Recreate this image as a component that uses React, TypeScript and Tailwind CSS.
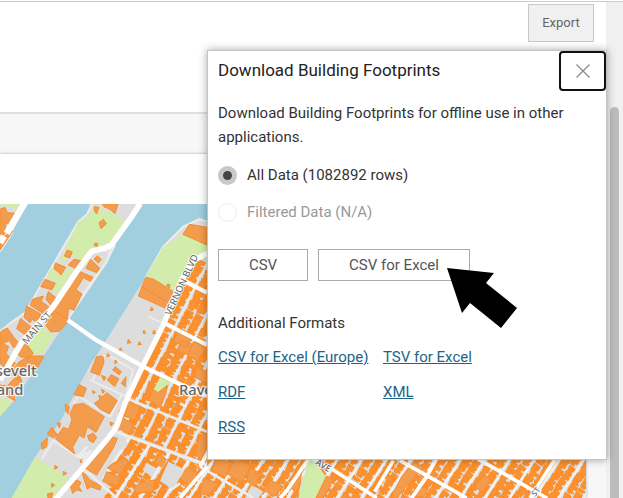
import React from "react";

type Pt = [number, number];

function random(seed: number) {
  let s = seed;
  return () => {
    s = (s * 16807) % 2147483647;
    return s / 2147483647;
  };
}

/* Rows of small houses along a street grid turned by `angle` degrees. */
function houseRows(
  ox: number,
  oy: number,
  angle: number,
  across: number,
  down: number,
  street: number,
  seed: number,
): string {
  const r = random(seed);
  const a = (angle * Math.PI) / 180;
  const at = (u: number, v: number): Pt => [
    ox + u * Math.cos(a) - v * Math.sin(a),
    oy + u * Math.sin(a) + v * Math.cos(a),
  ];
  const out: string[] = [];
  for (let u = 0; u < across; u += street) {
    for (let side = 0; side < 2; side++) {
      const base = u + 5 + side * (street / 2 - 3);
      const width = street / 2 - 3;
      let v = 0;
      while (v < down) {
        const len = 9 + r() * 18;
        const l = base + r() * 4;
        const w = width - r() * 8;
        const notch = w * (0.5 + r() * 0.4);
        const pts = [
          at(l, v),
          at(l + w, v + r() * 3),
          at(l + w, v + len * 0.6),
          at(l + notch, v + len * 0.65),
          at(l + notch, v + len),
          at(l + r() * 5, v + len),
        ];
        out.push("M" + pts.map((p) => `${Math.round(p[0])} ${Math.round(p[1])}`).join("L") + "Z");
        v += len + (r() > 0.85 ? 4 : 0);
      }
    }
  }
  return out.join("");
}

function gridLines(ox: number, oy: number, angle: number, across: number, down: number, street: number): string {
  const a = (angle * Math.PI) / 180;
  let d = "";
  for (let u = 0; u <= across; u += street) {
    const x = ox + u * Math.cos(a);
    const y = oy + u * Math.sin(a);
    d += `M${Math.round(x)} ${Math.round(y)}L${Math.round(x - down * Math.sin(a))} ${Math.round(y + down * Math.cos(a))}`;
  }
  return d;
}

const northHouses = houseRows(560, 190, 27, 420, 640, 68, 77);
const northStreets = gridLines(560, 190, 27, 420, 640, 68);
const southHouses = houseRows(1050, -275, 33, 1700, 1500, 62, 1234);
const southStreets = gridLines(1050, -275, 33, 1700, 1500, 62);

/* Buildings of the island and its west bank. */
const islandBuildings =
  "M0 58L15 52L22 68L46 70L28 104L18 98L15 130L0 142ZM12 140L38 124L0 180V158Z" +
  "M283 50L297 52L290 72L283 62ZM307 42H354L345 71L330 58L312 50ZM297 98L310 88L319 101L303 116Z" +
  "M283 160L293 160L291 170L283 167ZM202 180L217 186L209 204L193 198ZM205 225L222 208L244 212L234 239Z" +
  "M166 219L197 232L183 255L174 245L162 236ZM122 290L135 268L166 280L156 299ZM258 235L272 208L299 235L290 248L270 240Z" +
  "M282 207L292 198L304 208L295 219ZM240 245L279 262L271 274L250 263L228 299L246 312L222 361L205 354L202 398L178 424L152 426L138 407L155 370L175 337Z" +
  "M145 305L170 325L155 348L138 328ZM98 328L130 318L124 334L148 352L132 372L90 345Z" +
  "M80 348L122 372L112 397L96 388L90 398L72 382ZM62 386L92 410L106 428L72 432L50 416Z" +
  "M5 422L22 414L40 440L62 465L40 472L28 452L8 460L0 450V430ZM0 455L26 470L18 490L46 520L26 545L0 520Z" +
  "M45 478L74 455L100 490L86 505L60 500ZM90 498L132 498L104 548L88 532L68 548L55 570L28 550L58 515Z" +
  "M40 568L60 560L66 576L40 602L45 632L20 618L0 600V585L22 588Z";

const riversideBuildings =
  "M568 103L621 112V165L549 133ZM437 262L462 268L520 305L495 354L415 318Z" +
  "M503 282L510 284L508 294L500 288ZM455 351L460 360L450 362ZM432 420L437 430L429 429ZM462 420L467 431L458 431Z" +
  "M385 448L393 458L382 460ZM418 455L424 463L414 465ZM362 473L366 481L357 480Z" +
  "M290 500L308 498L312 516L298 556L272 546L282 520ZM323 490L330 498L320 500ZM345 510L352 515L345 522Z" +
  "M338 540L346 530L364 545L358 554ZM322 570L334 554L356 566L344 590ZM364 580L378 560L376 590ZM304 556L318 562L312 572Z" +
  "M222 614L238 584L259 595L250 620ZM278 602L286 606L280 612ZM305 598L314 604L308 610Z" +
  "M283 640L300 628L296 616L308 620L320 608L352 632L328 672L300 658ZM195 642L208 650L204 672L198 664Z" +
  "M222 645L250 640L313 680L288 727L262 710L252 744L238 735L218 772L224 792L166 746L190 712L206 718L216 688L210 672Z" +
  "M142 732L155 712L172 734L160 744ZM124 760L142 744L140 770L126 778ZM172 698L182 700L178 714ZM330 696L340 700L332 708Z" +
  "M262 736L272 734L278 728L290 742L280 758L268 752ZM240 806L252 810L242 818ZM165 826L174 832L164 838ZM190 844L200 850L190 856Z" +
  "M155 880L164 886L155 892ZM142 912L158 908L155 924H144Z" +
  "M208 878L232 870L243 878L236 890L246 904L230 900L218 910ZM245 845L258 855L270 870L304 888L300 900L270 890L262 898Z";

const cityBuildings =
  "M580 455L618 475L592 514L564 498ZM545 452L578 462L562 494L530 482ZM533 415L576 435L562 472L520 455ZM585 445L621 462V490Z" +
  "M446 628L458 598L474 608L502 586L498 610L480 654Z" +
  "M375 628L420 650L404 690L368 676L356 668ZM358 680L400 700L388 734L350 712Z" +
  "M590 530L621 545V580L584 562ZM598 740L621 730V792L606 810L586 792Z" +
  "M300 780L330 740L352 745L340 774L290 855L255 835Z" +
  "M338 820L372 804L385 815L360 854L322 834ZM320 845L362 862L352 890L308 874ZM425 875L465 870L458 905L410 910L400 895Z" +
  "M480 792L499 808L485 832L464 818ZM562 832L592 850L575 890L540 868ZM592 822L612 828L602 844Z" +
  "M1240 816L1270 830L1190 924H1172L1205 860ZM1270 830L1296 858L1278 874L1272 892L1252 878ZM1250 886L1286 896L1270 922L1232 916Z" +
  "M1452 856L1474 870L1446 906L1424 890Z" +
  "M700 802L752 826L725 878L680 850ZM750 832L780 850L768 890L740 874ZM812 870L850 890L820 918L790 900ZM764 854L784 844L780 864Z" +
  "M888 852L905 842L900 885L888 908L870 890ZM980 858L1000 868L970 924H948Z" +
  "M645 806L700 818L675 862L636 842ZM610 865L656 880L628 912H600Z";

const parks =
  "M0 42H66L58 66L36 52H18L0 44ZM262 72L285 52L345 72L378 98L330 165L275 132L250 88L265 78Z" +
  "M235 95L250 88L278 132L320 166L285 178L265 190L245 212L215 196L190 188Z" +
  "M188 195L206 190L200 214L178 222ZM205 232L220 240L175 310L153 298Z" +
  "M150 240L170 222L163 240L185 258L165 275L140 262ZM115 408L164 434L132 480L80 478Z" +
  "M85 475L160 440L125 492L86 494ZM0 622L38 636L0 680Z" +
  "M550 130L621 168V205L560 235L515 318L435 262L490 170Z" +
  "M105 801L205 862L165 924H35Z";

function CityMap() {
  return (
    <svg
      viewBox="0 42 1758 882"
      preserveAspectRatio="xMinYMin slice"
      className="block size-full bg-[#dddddd]"
      role="img"
      aria-label="Map of building footprints"
    >
      <defs>
        <clipPath id="north">
          <path d="M621 200L585 215L558 260L505 380L440 510L340 715L621 820Z" />
        </clipPath>
        <clipPath id="south">
          <path d="M345 725L621 835V750L1758 750V924H180Z" />
        </clipPath>
      </defs>
      <path
        fill="#a1cfdf"
        d="M80 42H275L262 72L235 95L75 368L30 400L0 424V184L38 126ZM430 42H758V100H621L598 87L550 110L490 170L435 265L300 480L270 525L225 610L180 695L105 801L35 924H0V678L40 635L130 500L205 385L300 250L335 170Z"
      />
      <g fill="none" stroke="#ececec" strokeWidth="6">
        <path d="M275 42L262 72L235 95L75 368L30 400L0 424M38 126L0 184M335 170L318 218L205 385M621 95L598 87L550 110L490 170L435 265" />
        <path d="M278 132L318 185M345 165L318 218L290 256L225 345M445 380L500 404M270 570L380 620M280 570L305 498L325 496L400 540L378 618M220 640L236 618L330 680M330 680L365 615M125 808L160 752L232 800" />
      </g>
      <path fill="#d2ecab" d={parks} />
      <g clipPath="url(#north)">
        <path d={northHouses} fill="#fb9130" stroke="#fb8d25" strokeWidth="3" />
        <path d={northStreets} fill="none" stroke="#e9e9e9" strokeWidth="7" />
      </g>
      <g clipPath="url(#south)">
        <path d={southHouses} fill="#fb9130" stroke="#fb8d25" strokeWidth="3" />
        <path d={southStreets} fill="none" stroke="#f1f1f1" strokeWidth="8" />
      </g>
      <g fill="#dddddd">
        <path d="M505 815L552 838L520 900L480 872ZM755 885L790 905L775 924H735ZM438 818L470 835L455 860L430 842ZM355 740L385 760L365 780L345 765Z" />
        <path d="M270 890L300 860L330 890L310 924H250ZM905 870L920 842L916 890L895 912Z" />
        <path fill="#d2ecab" d="M480 562L514 578L500 592L472 610L460 600ZM915 805L945 815L978 860L948 924H895L915 850Z" />
      </g>
      <g fill="#f49c4d" stroke="#f78d2d" strokeWidth="3" strokeLinejoin="round">
        <path d={islandBuildings} />
        <path d={riversideBuildings} />
        <path d={cityBuildings} />
        <path fill="none" d="M425 290L502 336M165 365L200 385M384 652L370 684" />
      </g>
      <g fill="none" stroke="#ededed" strokeWidth="8">
        <path d="M380 625L621 725M345 725L621 825M555 270L621 306M255 840L350 924M600 830L760 924M232 800L262 770M238 806L260 785M248 814L272 782M540 640L560 650M512 900L540 880" />
      </g>
      <g fill="none" stroke="#ffffff" strokeLinejoin="round">
        <path strokeWidth="17" d="M420 42L398 76L335 164L318 173L275 184L240 230L160 350L62 462L0 570" />
        <path strokeWidth="20" d="M76 36L20 130M12 138L0 158" />
        <path strokeWidth="13" d="M203 390L285 448L430 530L560 592L621 618" />
        <path strokeWidth="12" d="M495 400L621 465M545 270L621 308" />
        <path strokeWidth="16" d="M621 190L580 212L545 270L490 405L425 535L375 640L350 710L320 750L165 930" />
        <path strokeWidth="11" d="M621 830L540 924M644 750L600 830M930 800L862 900L840 924M925 800L1000 840L1130 924M1200 812L1290 862L1400 924M1432 806L1640 924M1310 806L1280 860L1235 924M1670 800L1615 885L1590 924M1180 812L1124 905" />
      </g>
      <g
        fill="#666666"
        stroke="#ffffff"
        strokeOpacity="0.85"
        strokeWidth="6"
        strokeLinejoin="round"
        paintOrder="stroke"
        className="font-['Noto_Sans','Open_Sans',sans-serif]"
      >
        <text fontSize="29" transform="translate(80 464) rotate(-49)">MAIN ST</text>
        <text fontSize="29" transform="translate(512 378) rotate(-65)">VERNON BLVD</text>
        <text fontSize="27" fontWeight="500" transform="translate(944 822) rotate(31)">AVE</text>
        <text fontSize="24" fontWeight="500" transform="translate(1606 921) rotate(-52)">ST</text>
        <g fontSize="44" fontWeight="500" strokeWidth="8">
          <text x="110" y="558" textAnchor="end">sevelt</text>
          <text x="70" y="615" textAnchor="end">and</text>
          <text x="537" y="614">Rave</text>
        </g>
      </g>
    </svg>
  );
}

function Choice({ label, ...input }: { label: string } & React.ComponentProps<"input">) {
  return (
    <label className="flex items-center gap-2.5 leading-5 has-disabled:text-[#999999]">
      <input
        type="radio"
        name="rows"
        className="size-[19px] appearance-none rounded-full border border-[#c8c8c8] bg-white checked:border-5 checked:bg-[#444444] disabled:border-[#ececec]"
        {...input}
      />
      {label}
    </label>
  );
}

function FormatLink({ children }: { children: string }) {
  return (
    <a href="#" className="justify-self-start text-[#1d6489] underline underline-offset-1">
      {children}
    </a>
  );
}

function DownloadPanel() {
  return (
    <section
      aria-labelledby="download-title"
      className="absolute top-12 -right-px z-10 w-[400px] border border-[#c4c4c4] bg-white pb-[22px] text-[15px] text-[#333333] shadow-[0_0_8px_rgba(0,0,0,0.35)]"
    >
      <header className="flex items-start justify-between pl-2.5">
        <h2 id="download-title" className="pt-[7px] text-[17px] leading-6 text-[#222222]">
          Download Building Footprints
        </h2>
        <button
          aria-label="Close"
          className="flex h-10 w-[47px] items-center justify-center rounded-[4px] border-2 border-[#101010] bg-white"
        >
          <svg viewBox="0 0 14 14" className="size-3.5" stroke="#888888" strokeWidth="1.2" fill="none">
            <path d="M.5.5l13 13M13.5.5l-13 13" />
          </svg>
        </button>
      </header>
      <div className="px-2.5">
        <p className="mt-2.5 leading-6">Download Building Footprints for offline use in other applications.</p>
        <div className="mt-4 flex flex-col gap-[17px]">
          <Choice label="All Data (1082892 rows)" defaultChecked />
          <Choice label="Filtered Data (N/A)" disabled />
        </div>
        <div className="mt-[27px] flex gap-2.5 text-[#555555]">
          <button className="h-8 w-[90px] border border-[#aaaaaa] bg-white">CSV</button>
          <button className="h-8 w-[152px] border border-[#aaaaaa] bg-white">CSV for Excel</button>
        </div>
        <h3 className="mt-8 leading-5">Additional Formats</h3>
        <div className="mt-3.5 grid grid-cols-[165px_1fr] gap-y-[15px] leading-5">
          <FormatLink>CSV for Excel (Europe)</FormatLink>
          <FormatLink>TSV for Excel</FormatLink>
          <FormatLink>RDF</FormatLink>
          <FormatLink>XML</FormatLink>
          <FormatLink>RSS</FormatLink>
        </div>
      </div>
      <svg viewBox="0 0 70 60" className="absolute top-[217px] left-[239px] h-[60px] w-[70px]" aria-hidden="true">
        <path d="M0 0l47 5-8 10 31 25-16 20-31-25-8 10z" />
      </svg>
    </section>
  );
}

export default function App() {
  return (
    <div className="flex h-screen overflow-hidden border-t border-white bg-white font-[Roboto,sans-serif]">
      <main className="relative flex min-w-0 flex-1 flex-col border-t border-[#cccccc]">
        <div className="flex h-[110px] shrink-0 items-start justify-end px-3 pt-0.5">
          <button className="h-[38px] w-[66px] border border-[#c8c8c8] bg-[#f0f0f0] text-[13px] text-[#666666]">
            Export
          </button>
        </div>
        <div className="flex min-h-0 flex-1 flex-col border-t-2 border-[#e0e0e0] bg-[#f7f7f7] pt-10">
          <div className="mr-5 flex min-h-0 flex-1 flex-col bg-white pt-[50px] shadow-[0_0_3px_rgba(0,0,0,0.3)]">
            <div className="min-h-0 flex-1">
              <CityMap />
            </div>
          </div>
        </div>
        <DownloadPanel />
      </main>
      <div className="w-[17px] shrink-0 border-t border-[#cccccc] bg-[#f0f0f0] px-1 pt-[105px]">
        <div className="h-full rounded-t-full bg-[#bcbcbc]" />
      </div>
    </div>
  );
}
